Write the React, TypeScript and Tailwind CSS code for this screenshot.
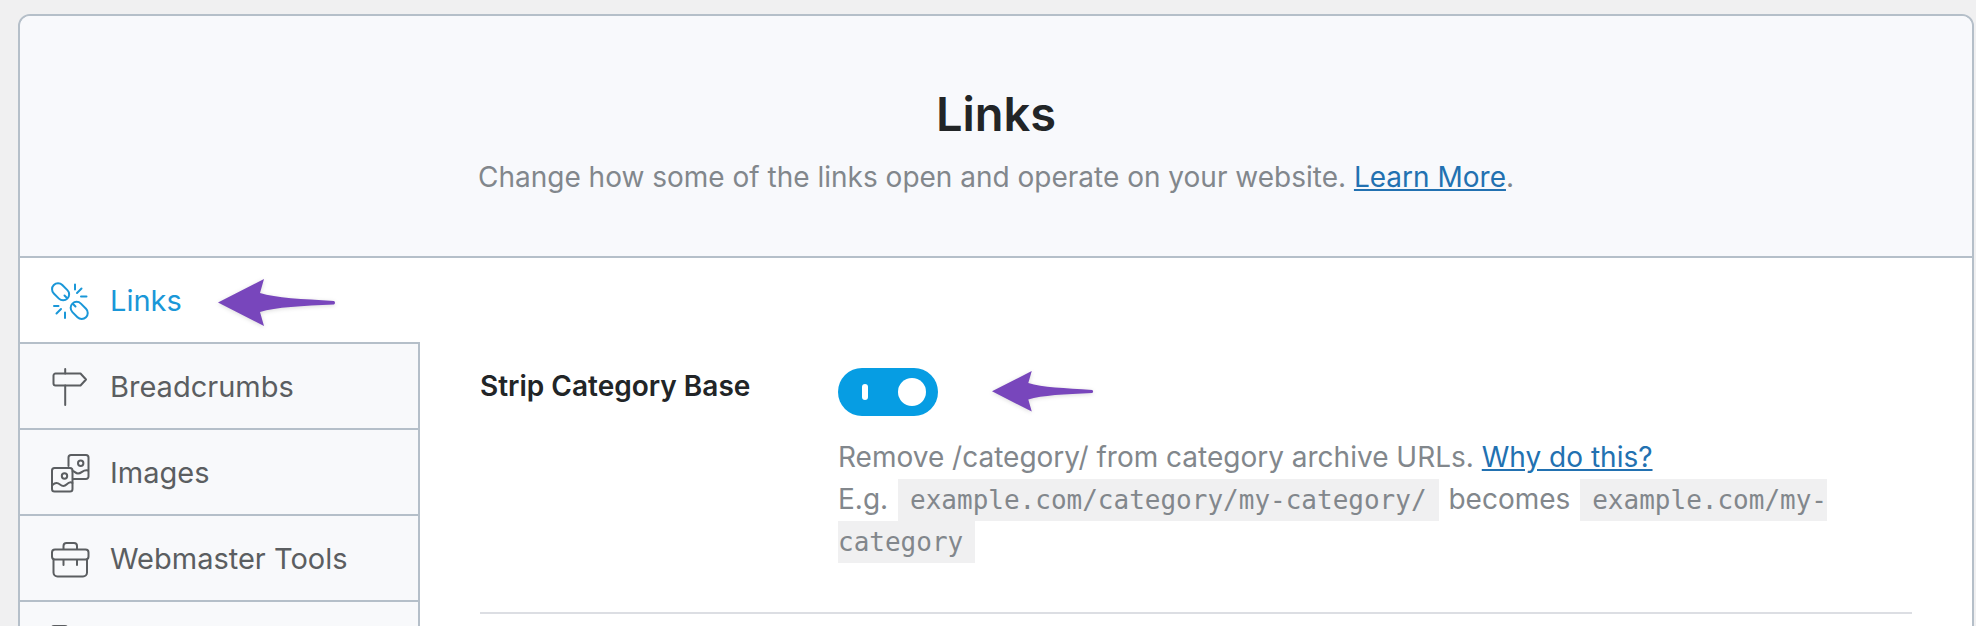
import type { ReactNode } from 'react';

function LinksIcon() {
  return (
    <g>
      <rect x="-6" y="-9.6" width="12" height="19.2" rx="6" transform="translate(10.6 10.8) rotate(-45)" />
      <rect x="-6" y="-9.6" width="12" height="19.2" rx="6" transform="translate(29.2 29.4) rotate(-45)" />
      <path d="M14.500 14.500l2.500 2.500M23 23l2.500 2.500M25 3.500v5M27 12l4.500-4.500M31 15.500h5.500M4 25h4.500M11 28l-4.500 4.500M15 31.500v5.500" />
    </g>
  );
}

function SignIcon() {
  return (
    <g>
      <path d="M5.500 6.500h25l5.500 6l-5.500 6h-25a2 2 0 0 1-2-2v-8a2 2 0 0 1 2-2z" />
      <path d="M15.200 2v4.500M15.200 18.500v19.500" />
    </g>
  );
}

function ImagesIcon() {
  return (
    <g>
      <path d="M18.500 13v-8.500a2.500 2.500 0 0 1 2.500-2.500h15a2.500 2.500 0 0 1 2.500 2.500v19a2.500 2.500 0 0 1-2.500 2.500h-12.500" />
      <rect x="2" y="15" width="20.500" height="23.500" rx="2.500" />
      <circle cx="30.700" cy="10.200" r="2.700" />
      <circle cx="14.500" cy="23" r="2.700" />
      <path d="M2.500 32c3-3 5-2.500 7.500-.5c2.500 2 4.500 2 6.500 0c2-2 4-3 6-1.500M22.500 18c2 0 3 2.500 5.500 2.500c4 0 5-4.500 10-3" />
    </g>
  );
}

function ToolboxIcon() {
  return (
    <g>
      <rect x="2" y="10.500" width="36.500" height="10" rx="3" />
      <path d="M3.500 20.500v13a4 4 0 0 0 4 4h25.500a4 4 0 0 0 4-4v-13M13.500 10v-3a3 3 0 0 1 3-3h7.500a3 3 0 0 1 3 3v3M13.500 21v5M27 21v5" />
    </g>
  );
}

function ListIcon() {
  return (
    <g>
      <rect x="2" y="1" width="15" height="14" rx="2" />
      <rect x="2" y="23" width="15" height="14" rx="2" />
      <path d="M23 5h15M23 11h9M23 27h15M23 33h9" />
    </g>
  );
}

interface Tab {
  id: string;
  label: string;
  icon: ReactNode;
  hideLabel?: boolean;
}

const TABS: Tab[] = [
  { id: 'links', label: 'Links', icon: <LinksIcon /> },
  { id: 'breadcrumbs', label: 'Breadcrumbs', icon: <SignIcon /> },
  { id: 'images', label: 'Images', icon: <ImagesIcon /> },
  { id: 'webmaster', label: 'Webmaster Tools', icon: <ToolboxIcon /> },
  { id: 'others', label: 'Others', icon: <ListIcon />, hideLabel: true },
];

function Arrow({ className }: { className: string }) {
  return (
    <svg viewBox="0 0 118 48" className={`shrink-0 overflow-visible drop-shadow-sm ${className}`} aria-hidden="true">
      <path
        d="M0 23.500L46 0L42 14C58 19 84 20 116 22Q118 23.500 116 25.500C84 27 58 28 42 33L46 47Z"
        fill="#7846bc"
      />
    </svg>
  );
}

function NavTab({ tab, active }: { tab: Tab; active: boolean }) {
  const state = active ? 'text-[#1a97d8] bg-white' : 'text-[#5b5e61] bg-[#f8f9fb] border-r-2';
  return (
    <a
      href={`#${tab.id}`}
      aria-label={tab.hideLabel ? tab.label : undefined}
      className={`flex h-[86px] items-center border-b-2 border-[#b5bfc9] pt-[2px] pl-[30px] text-[29px] ${state}`}
    >
      <svg
        viewBox="0 0 40 40"
        className="mr-5 size-10 shrink-0"
        fill="none"
        stroke="currentColor"
        strokeWidth="2"
        strokeLinecap="round"
        strokeLinejoin="round"
        aria-hidden="true"
      >
        {tab.icon}
      </svg>
      {!tab.hideLabel && <span>{tab.label}</span>}
      {active && <Arrow className="mt-1 ml-9 w-[118px]" />}
    </a>
  );
}

function Code({ children }: { children: ReactNode }) {
  return (
    <code className="mx-[2px] bg-[#f0f0f1] px-3 py-[6px] font-['DejaVu_Sans_Mono',monospace] text-[26px] leading-none">
      {children}
    </code>
  );
}

export default function App() {
  return (
    <div className="h-screen overflow-hidden bg-[#f0f0f1] pt-[14px] pr-[2px] pl-[18px] font-['Inter',sans-serif]">
      <div className="min-h-screen overflow-hidden rounded-t-xl border-2 border-[#b5bfc9] bg-white">
        <header className="border-b-2 border-[#b5bfc9] bg-[#f8f9fc] pt-[68px] pb-[58px] text-center">
          <h1 className="text-[47px] leading-[60px] font-semibold text-[#222527]">Links</h1>
          <p className="mt-3 text-[28px] leading-[42px] text-[#82878c]">
            Change how some of the links open and operate on your website.{' '}
            <a href="#learn-more" className="text-[#2271b1] underline">Learn More</a>.
          </p>
        </header>

        <div className="flex">
          <nav className="w-[400px] shrink-0">
            {TABS.map((tab) => (
              <NavTab key={tab.id} tab={tab} active={tab.id === 'links'} />
            ))}
          </nav>

          <main className="min-w-0 flex-1 px-[60px] pt-[110px]">
            <div className="flex border-b-2 border-[#dcdee3] pb-[50px]">
              <label
                htmlFor="strip-category-base"
                className="w-1/4 shrink-0 text-[28px] leading-[36px] font-semibold text-[#222527]"
              >
                Strip Category Base
              </label>
              <div className="min-w-0 flex-1">
                <div className="flex items-center">
                  <input
                    id="strip-category-base"
                    type="checkbox"
                    role="switch"
                    defaultChecked
                    className="flex h-12 w-[100px] shrink-0 appearance-none items-center justify-between rounded-full bg-[#069de3] pr-3 pl-6 before:h-4 before:w-[6px] before:rounded-sm before:bg-white after:size-7 after:rounded-full after:bg-white"
                  />
                  <Arrow className="ml-[54px] w-[102px]" />
                </div>
                <p className="mt-5 text-[28px] leading-[42px] text-[#82878c]">
                  Remove /category/ from category archive URLs.{' '}
                  <a href="#why" className="text-[#2271b1] underline">Why do this?</a>
                  <br />
                  E.g. <Code>example.com/category/my-category/</Code> becomes <Code>example.com/my-category</Code>
                </p>
              </div>
            </div>
          </main>
        </div>
      </div>
    </div>
  );
}
